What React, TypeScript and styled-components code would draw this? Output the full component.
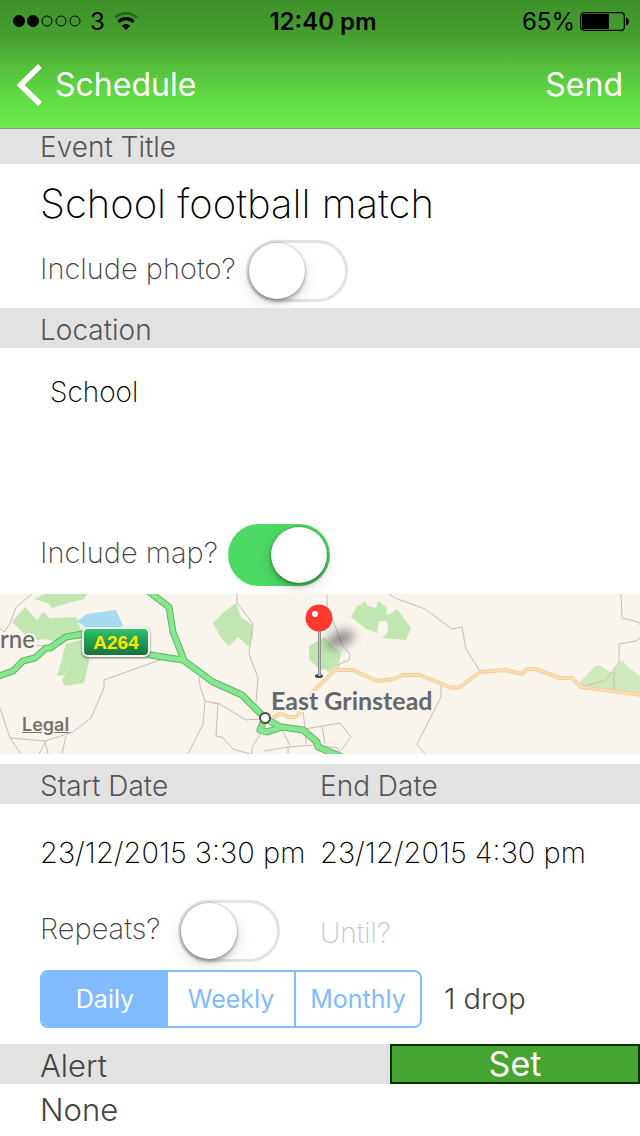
import React, { useState } from "react";
import styled, { createGlobalStyle } from "styled-components";

const GlobalStyle = createGlobalStyle`
  *, *::before { box-sizing: border-box; }
  body { margin: 0; background: #fff; }
  body, input, textarea, button {
    font-family: Inter, "Liberation Sans", sans-serif;
  }
`;

const Page = styled.main`
  display: flex;
  flex-direction: column;
  width: 100%;
`;

const Header = styled.header`
  background: linear-gradient(#3d922a, #469e30 27%, #54bb3b 50%, #61da46 75%, #6deb4d);
  border-bottom: 1px solid #8f9a8c;
`;

const StatusBar = styled.div`
  display: grid;
  grid-template-columns: 1fr auto 1fr;
  align-items: center;
  height: 42px;
  padding: 0 11px 0 13px;
  font-size: 24px;
  color: #000;
`;

const StatusGroup = styled.div<{ $end?: boolean }>`
  display: flex;
  align-items: center;
  justify-content: ${(p) => (p.$end ? "flex-end" : "flex-start")};
  gap: ${(p) => (p.$end ? 5 : 9)}px;
`;

const Clock = styled.time`
  padding-left: 4px;
  font-weight: 600;
`;

const NavBar = styled.nav`
  display: flex;
  align-items: center;
  justify-content: space-between;
  height: 86px;
  padding: 0 17px 0 16px;
`;

const NavButton = styled.button`
  display: flex;
  align-items: center;
  gap: 12px;
  padding: 0;
  border: 0;
  background: none;
  color: #fff;
  font-size: 32px;
  line-height: 40px;
`;

const Band = styled.div<{ $short?: boolean }>`
  display: grid;
  grid-template-columns: 1fr 1fr;
  align-items: center;
  height: ${(p) => (p.$short ? 35 : 40)}px;
  padding-top: ${(p) => (p.$short ? 0 : 4)}px;
  background: #e2e2e2;
  color: #555;
`;

const BandLabel = styled.label`
  font-size: 28px;
  line-height: 36px;
  font-weight: 300;

  &:first-child { padding-left: 40px; }
`;

const TitleInput = styled.input`
  width: 100%;
  height: 76px;
  padding: 2px 40px 0;
  border: 0;
  outline: 0;
  background: none;
  color: #000;
  font-size: 40px;
  font-weight: 200;
`;

const ToggleRow = styled.div`
  display: flex;
  align-items: center;
  gap: 10px;
  padding-left: 40px;
`;

const ToggleLabel = styled.label`
  min-width: 128px;
  padding-bottom: 4px;
  color: #444;
  font-size: 29px;
  line-height: 36px;
  font-weight: 200;
`;

const Switch = styled.input.attrs({ type: "checkbox", role: "switch" })`
  appearance: none;
  flex: none;
  width: 102px;
  height: 62px;
  margin: 0;
  padding: ${(p) => (p.checked ? "3px 3px 3px 43px" : "0")};
  border: ${(p) => (p.checked ? "0" : "3px solid #e3e3e3")};
  border-radius: 31px;
  background: ${(p) => (p.checked ? "#4cd964" : "#fff")};

  &::before {
    content: "";
    display: block;
    width: 56px;
    height: 56px;
    border-radius: 50%;
    background: #fff;
    box-shadow: 0 0 1px 1px rgba(0, 0, 0, 0.12), 0 3px 4px rgba(0, 0, 0, 0.28),
      0 6px 16px rgba(0, 0, 0, 0.12);
  }
`;

const TitleSection = styled.section`
  padding-bottom: 6px;
`;

const LocationSection = styled.section`
  padding-bottom: 8px;
`;

const LocationInput = styled.textarea`
  display: block;
  width: 100%;
  height: 176px;
  padding: 26px 50px 0;
  border: 0;
  outline: 0;
  resize: none;
  background: none;
  color: #000;
  font-size: 28px;
  line-height: 36px;
  font-weight: 200;
`;

const MapFrame = styled.section`
  position: relative;
  height: 160px;
  margin-bottom: 10px;
  overflow: hidden;
  background: #f9f5ed;
`;

const MapDrawing = styled.svg`
  display: block;
  width: 100%;
  height: 100%;
`;

const LegalLink = styled.a`
  position: absolute;
  left: 22px;
  bottom: 17px;
  color: #77746f;
  font-size: 18px;
  line-height: 24px;
  font-weight: 600;
`;

const HalfGrid = styled.section`
  display: grid;
  grid-template-columns: 1fr 1fr;
  align-items: center;
`;

const DateRow = styled(HalfGrid)`
  height: 96px;
  padding-top: 2px;
`;

const FieldInput = styled.input<{ $indent?: boolean }>`
  width: 100%;
  min-width: 0;
  padding: 0 0 0 ${(p) => (p.$indent ? 40 : 0)}px;
  border: 0;
  outline: 0;
  background: none;
  color: #000;
  font-size: 29px;
  line-height: 36px;
  font-weight: 200;

  &::placeholder { color: #c7c7cd; opacity: 1; }
`;

const UntilInput = styled(FieldInput)`
  padding-top: 4px;
  font-size: 28px;
`;

const RepeatRow = styled.section`
  display: flex;
  align-items: center;
  gap: 22px;
  padding: 8px 40px 16px;
`;

const Segments = styled.div`
  display: grid;
  grid-template-columns: repeat(3, 1fr);
  width: 382px;
  height: 58px;
  overflow: hidden;
  border: 2px solid #80bbff;
  border-radius: 8px;
`;

const Segment = styled.button<{ $on: boolean }>`
  padding: 0;
  border: 0;
  background: ${(p) => (p.$on ? "#80bbff" : "#fff")};
  color: ${(p) => (p.$on ? "#fff" : "#80bbff")};
  font-size: 25px;

  &:last-child { border-left: 2px solid #80bbff; }
`;

const Count = styled.output`
  color: #444;
  font-size: 29px;
  line-height: 36px;
  font-weight: 300;
`;

const AlertBand = styled.div`
  display: flex;
  height: 40px;
  padding-left: 40px;
  background: #e2e2e2;
`;

const AlertText = styled.span`
  flex: 1;
  padding-top: 4px;
  color: #444;
  font-size: 31px;
  line-height: 36px;
  font-weight: 300;
`;

const AlertValue = styled(AlertText)`
  padding: 8px 40px;
`;

const SetButton = styled.button`
  width: 250px;
  padding: 0;
  border: 2px solid #0d3006;
  background: #46a430;
  color: #fff;
  font-size: 34px;
  line-height: 36px;
`;

const Signal = () => (
  <svg width="68" height="14" viewBox="0 0 68 14" aria-hidden="true">
    {[0, 1, 2, 3, 4].map((i) => (
      <circle key={i} cx={6 + i * 14} cy="7" r={i < 2 ? 5.5 : 5} fill={i < 2 ? "#000" : "none"} stroke="#000" strokeWidth="1" />
    ))}
  </svg>
);

const Wifi = () => (
  <svg width="24" height="18" viewBox="0 0 24 18" aria-hidden="true" fill="none" strokeWidth="3">
    <path d="M1.2 5.600 A15.500 15.500 0 0 1 22.800 5.600" stroke="#27691a" />
    <path d="M4.400 9.800 A10.500 10.500 0 0 1 19.600 9.800" stroke="#000" strokeWidth="3.200" />
    <path d="M12 18 L7.600 13.800 A6 6 0 0 1 16.400 13.800 Z" fill="#000" />
  </svg>
);

const Battery = () => (
  <svg width="49" height="19" viewBox="0 0 49 19" aria-hidden="true">
    <rect x="0.7" y="0.7" width="43.6" height="17.6" rx="3" fill="none" stroke="#000" strokeWidth="1.2" />
    <rect x="2" y="2" width="27" height="15" rx="1" fill="#000" />
    <path d="M46 6 h1 q2 1 2 3.500 q0 2.500 -2 3.500 h-1 z" fill="#000" />
  </svg>
);

const Chevron = () => (
  <svg width="27" height="42" viewBox="0 0 27 42" aria-hidden="true">
    <path d="M24 2 L4.500 21 L24 40" fill="none" stroke="#fff" strokeWidth="5.500" />
  </svg>
);

const mainRoads = [
  "M-4 83 L13 77 L23 67 L35 64 L46 54 L50 54 L66 43 L83 40 L110 50 L150 61 L183 66 L213 88 L242 101 L265 124 L260 136 L267 138 L282 133 L303 136 L317 148 L318 153 L342 163",
  "M148 -3 L169 13 L173 38 L184 66",
  "M265 124 L280 133",
];
const sideRoad =
  "M273 124 L280 119 L288 123 L295 123 L300 119 L313 98 L335 76 L353 76 L377 87 L393 85 L403 81 L420 81 L452 94 L460 93 L480 78 L505 76 L522 80 L527 75 L535 75 L560 84 L572 84 L581 93 L642 101";
const lanes = [
  "M32 0 L16 13 L10 30 L4 38 L0 34",
  "M34 51 L46 52",
  "M160 66 L104 86 L104 94 L91 124 L73 138 L45 147 L10 144 L0 114",
  "M10 144 L21 160",
  "M45 147 L48 160 M45 149 L39 160 M66 142 L62 160",
  "M199 83 L200 92 L205 107 L203 130 L188 160",
  "M205 107 L218 110 L216 142 L222 143 L233 155 L250 160",
  "M210 108 L220 110 L246 126 L260 125",
  "M237 0 L237 9 L253 30 L249 60 L258 84 L256 108",
  "M327 0 L327 12 L334 29 L342 51 L350 60 L349 66 L340 70 L336 75",
  "M303 117 L305 134 L306 150 M322 132 L325 150",
  "M305 135 L340 129 L351 143 L338 160 L338 154 L315 151 L288 153 L288 160 M288 153 L264 157 M262 138 L252 153 L252 160 M282 136 L290 151",
  "M389 0 L395 4 L425 15 L452 35 L462 33 L466 55 L480 77",
  "M441 91 L441 103 L417 150 L425 160",
  "M621 0 L622 24 L638 28 L640 31 M640 44 L636 47 L619 50 L619 68 L606 86 L581 93 M614 78 L614 97",
];
const woods = [
  "M34 5 L45 0 L87 0 L84 5 L72 8 L52 14 L48 9 Z",
  "M12 28 L25 13 L37 26 L43 18 L50 24 L76 23 L81 36 L92 44 L66 46 L56 48 L45 45 L30 47 L22 38 Z",
  "M66 50 L88 44 L89 68 L84 89 L65 92 L62 86 L72 67 L64 81 L57 82 Z",
  "M213 29 L224 18 L236 9 L241 23 L252 31 L253 42 L249 53 L238 43 L229 52 L222 45 Z",
  "M309 52 L324 43 L335 54 L341 58 L339 71 L328 78 L326 75 L320 76 L309 65 Z",
  "M351 23 L357 12 L362 10 L365 7 L368 12 L376 14 L378 7 L387 14 L386 21 L392 19 L397 15 L411 34 L406 46 L382 44 L388 38 L387 27 L379 27 L377 39 L366 35 Z",
  "M579 89 L595 72 L599 71 L612 79 L621 66 L632 76 L640 82 L640 100 L581 93 Z",
];

const EventMap = () => (
  <MapDrawing viewBox="0 0 640 160" preserveAspectRatio="xMidYMid slice" role="img" aria-label="Map of East Grinstead">
    <defs>
      <linearGradient id="shield" x1="0" y1="0" x2="0" y2="1">
        <stop offset="0" stopColor="#2ec56c" />
        <stop offset="1" stopColor="#17703a" />
      </linearGradient>
      <linearGradient id="stem">
        <stop offset="0" stopColor="#777" />
        <stop offset="0.500" stopColor="#c4c4c4" />
        <stop offset="1" stopColor="#777" />
      </linearGradient>
      <filter id="soft" x="-50%" y="-100%" width="200%" height="300%">
        <feGaussianBlur stdDeviation="5" />
      </filter>
      <filter id="edge" x="-10%" y="-20%" width="120%" height="150%">
        <feGaussianBlur stdDeviation="1" />
      </filter>
    </defs>
    {woods.map((d) => <path key={d} d={d} fill={d.startsWith("M579") ? "#cfe9bd" : "#c1e6b0"} />)}
    <path d="M77 27 L87 20 L116 16 L123 32 L95 40 Z" fill="#a5dbf1" />
    {lanes.map((d) => <path key={d} d={d} fill="none" stroke="#c3beb7" />)}
    <path d={sideRoad} fill="none" stroke="#efd09a" strokeWidth="4" strokeLinejoin="round" />
    <path d={sideRoad} fill="none" stroke="#fbdfb2" strokeWidth="2" strokeLinejoin="round" />
    {mainRoads.map((d) => <path key={d} d={d} fill="none" stroke="#5cb768" strokeWidth="7" strokeLinejoin="round" />)}
    {mainRoads.map((d) => <path key={d} d={d} fill="none" stroke="#87e78e" strokeWidth="5" strokeLinejoin="round" />)}
    <circle cx="265" cy="124" r="5" fill="#fff" stroke="#4b4845" strokeWidth="2" />
    <rect x="82" y="34" width="68" height="30" rx="6" fill="#444" opacity="0.8" filter="url(#edge)" />
    <rect x="83" y="34" width="66" height="28" rx="5" fill="url(#shield)" stroke="#f4f4f4" strokeWidth="2" />
    <text x="116" y="55" textAnchor="middle" fontFamily="Liberation Sans, sans-serif" fontSize="19" fontWeight="700" fill="#ffe600">A264</text>
    <g fontFamily="Lato, sans-serif" fontWeight="700" fill="#66676b" stroke="#f9f5ed" strokeWidth="4" strokeLinejoin="round" paintOrder="stroke">
      <text x="0" y="54" fontSize="24" fontWeight="500">rne</text>
      <text x="271" y="116" fontSize="25">East Grinstead</text>
    </g>
    <ellipse cx="340" cy="45" rx="15" ry="8" transform="rotate(-20 340 45)" fill="#555" opacity="0.6" filter="url(#soft)" />
    <ellipse cx="319" cy="82" rx="4" ry="2" fill="#444" />
    <rect x="318" y="36" width="3" height="46" fill="url(#stem)" />
    <circle cx="319" cy="24" r="13.500" fill="#fe3a2f" />
    <circle cx="315" cy="20" r="3" fill="#fff" />
  </MapDrawing>
);

const periods = ["Daily", "Weekly", "Monthly"];

type ToggleProps = { id: string; text: string; initial?: boolean };

const Toggle = ({ id, text, initial = false }: ToggleProps) => {
  const [on, setOn] = useState(initial);
  return (
    <ToggleRow>
      <ToggleLabel htmlFor={id}>{text}</ToggleLabel>
      <Switch id={id} checked={on} onChange={(e) => setOn(e.target.checked)} />
    </ToggleRow>
  );
};

export default function App() {
  const [period, setPeriod] = useState("Daily");
  return (
    <Page>
      <GlobalStyle />
      <Header>
        <StatusBar>
          <StatusGroup>
            <Signal />
            <span>3</span>
            <Wifi />
          </StatusGroup>
          <Clock>12:40 pm</Clock>
          <StatusGroup $end>
            <span>65%</span>
            <Battery />
          </StatusGroup>
        </StatusBar>
        <NavBar>
          <NavButton type="button"><Chevron />Schedule</NavButton>
          <NavButton type="button">Send</NavButton>
        </NavBar>
      </Header>

      <Band $short><BandLabel htmlFor="title">Event Title</BandLabel></Band>
      <TitleSection>
        <TitleInput id="title" defaultValue="School football match" />
        <Toggle id="photo" text="Include photo?" />
      </TitleSection>

      <Band><BandLabel htmlFor="location">Location</BandLabel></Band>
      <LocationSection>
        <LocationInput id="location" defaultValue="School" />
        <Toggle id="map" text="Include map?" initial />
      </LocationSection>

      <MapFrame>
        <EventMap />
        <LegalLink href="#legal">Legal</LegalLink>
      </MapFrame>

      <Band>
        <BandLabel htmlFor="start">Start Date</BandLabel>
        <BandLabel htmlFor="end">End Date</BandLabel>
      </Band>
      <DateRow>
        <FieldInput id="start" $indent defaultValue="23/12/2015 3:30 pm" />
        <FieldInput id="end" defaultValue="23/12/2015 4:30 pm" />
      </DateRow>
      <HalfGrid>
        <Toggle id="repeats" text="Repeats?" />
        <UntilInput aria-label="Until" placeholder="Until?" />
      </HalfGrid>
      <RepeatRow>
        <Segments role="group" aria-label="Repeat period">
          {periods.map((p) => (
            <Segment key={p} type="button" $on={p === period} aria-pressed={p === period} onClick={() => setPeriod(p)}>
              {p}
            </Segment>
          ))}
        </Segments>
        <Count>1 drop</Count>
      </RepeatRow>

      <AlertBand>
        <AlertText>Alert</AlertText>
        <SetButton type="button">Set</SetButton>
      </AlertBand>
      <AlertValue>None</AlertValue>
    </Page>
  );
}
